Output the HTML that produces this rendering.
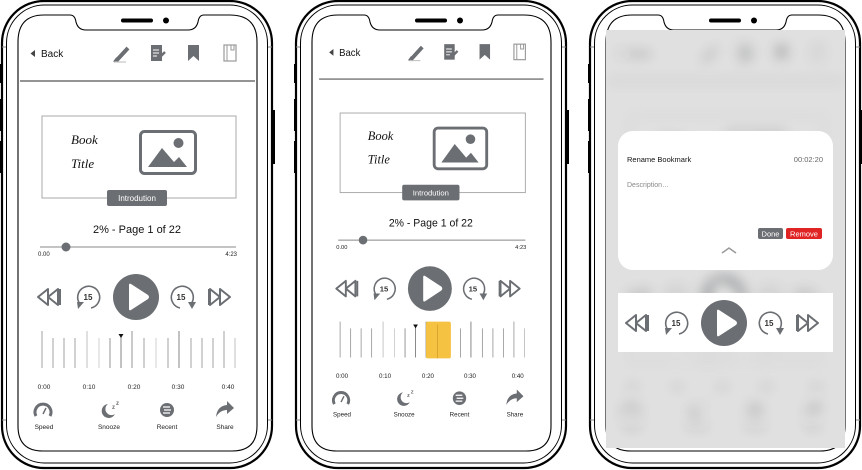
<!DOCTYPE html>
<html><head><meta charset="utf-8"><style>
html,body{margin:0;padding:0;background:#fff;width:862px;height:470px;overflow:hidden}
svg{display:block}
text{font-family:"Liberation Sans",sans-serif}
text.bt{font-family:"Liberation Serif",serif;font-style:italic}
</style></head><body>
<svg width="862" height="470" viewBox="0 0 862 470" xmlns="http://www.w3.org/2000/svg">
<defs>
<filter id="bl" x="-10%" y="-10%" width="120%" height="120%"><feGaussianBlur stdDeviation="6"/></filter>
<clipPath id="scr3"><path d="M606 30 H845 V448 H606Z"/></clipPath>
<g id="shell">
  <rect x="2" y="1" width="270" height="467" rx="42" fill="none" stroke="#000" stroke-width="2.2"/>
  <rect x="6.5" y="5" width="261" height="458" rx="38" fill="none" stroke="#000" stroke-width="1"/>
  <path d="M44 15 H70 Q75 15 76 22 Q78 30 86 30 H188 Q196 30 198 22 Q199 15 204 15 H230 Q257 15 257 42 V426 Q257 451 232 451 H43 Q18 451 18 426 V42 Q18 15 44 15Z" fill="none" stroke="#000" stroke-width="1.1"/>
  <rect x="121" y="18.5" width="32" height="4" rx="2" fill="#000"/>
  <circle cx="166" cy="20.5" r="3" fill="#000"/>
  <rect x="0" y="64" width="3" height="19" fill="#000"/>
  <rect x="0" y="99" width="3" height="32" fill="#000"/>
  <rect x="0" y="141" width="3" height="32" fill="#000"/>
  <rect x="272" y="110" width="3" height="54" fill="#000"/>
  <line x1="2" y1="47" x2="6" y2="47" stroke="#888"/><line x1="268" y1="47" x2="272" y2="47" stroke="#888"/>
  <line x1="2" y1="420" x2="6" y2="420" stroke="#888"/><line x1="268" y1="420" x2="272" y2="420" stroke="#888"/>
</g>
<g id="ctrls">
  <path d="M38 297 L48 289 V305Z M48 297 L58 289 V305Z" fill="none" stroke="#6b6e72" stroke-width="2" stroke-linejoin="round"/>
  <line x1="60" y1="289" x2="60" y2="305" stroke="#6b6e72" stroke-width="2"/>
  <path d="M80 304 A11 11 0 1 1 91 308" fill="none" stroke="#6b6e72" stroke-width="1.6"/>
  <path d="M77 302 L84 302 L78 309Z" fill="#6b6e72"/>
  <text x="88" y="300" font-size="8" font-weight="bold" text-anchor="middle" fill="#333">15</text>
  <circle cx="136" cy="297" r="23" fill="#6b6e72"/>
  <path d="M129 285 Q129 283 131 284 L148 295 Q150 297 148 299 L131 310 Q129 311 129 309Z" fill="#fff"/>
  <path d="M180 308 A11 11 0 1 1 191 304" fill="none" stroke="#6b6e72" stroke-width="1.6"/>
  <path d="M188 302 L196 302 L192 309Z" fill="#6b6e72"/>
  <text x="181" y="300" font-size="8" font-weight="bold" text-anchor="middle" fill="#333">15</text>
  <path d="M210 289 L220 297 L210 305Z M220 289 L230 297 L220 305Z" fill="none" stroke="#6b6e72" stroke-width="2" stroke-linejoin="round"/>
  <line x1="209" y1="289" x2="209" y2="305" stroke="#6b6e72" stroke-width="2"/>
</g>
<g id="content">
  <path d="M35 50 L30.5 53.5 L35 57Z" fill="#444"/>
  <text x="41" y="57" font-size="10" fill="#111">Back</text>
  <path d="M116 61 L128 48" stroke="#6b6e72" stroke-width="4" stroke-linecap="butt"/>
  <path d="M114 62 L117 58" stroke="#6b6e72" stroke-width="2"/>
  <line x1="114" y1="62" x2="126" y2="62" stroke="#bbb" stroke-width="1"/>
  <rect x="151" y="45" width="11" height="16" fill="#6b6e72"/>
  <path d="M153 50 H159 M153 53 H159 M153 56 H157" stroke="#fff" stroke-width="1"/>
  <path d="M158 59 L165 52" stroke="#6b6e72" stroke-width="2.5"/>
  <path d="M188 45 H199 V61 L193.5 56 L188 61Z" fill="#6b6e72"/>
  <rect x="224" y="45" width="12" height="16" fill="none" stroke="#999" stroke-width="1.2"/>
  <path d="M227 45 V61 M231 45 V50 H234 V45" fill="none" stroke="#999" stroke-width="1"/>
  <line x1="20" y1="81" x2="255" y2="81" stroke="#555" stroke-width="1.2"/>
  <rect x="42" y="116" width="194" height="82" fill="none" stroke="#aaa" stroke-width="1"/>
  <text class="bt" x="71" y="144" font-size="13" fill="#111">Book</text>
  <text class="bt" x="71" y="168" font-size="13" fill="#111">Title</text>
  <rect x="140.5" y="131.5" width="55" height="42" rx="4" fill="none" stroke="#6b6e72" stroke-width="3"/>
  <circle cx="178.5" cy="143" r="5" fill="#6b6e72"/>
  <path d="M148 167 L162 148 L174 162 L179 157 L187 167Z" fill="#6b6e72"/>
  <rect x="107" y="190" width="60" height="16" rx="2" fill="#6b6e72"/>
  <text x="137" y="201" font-size="8" text-anchor="middle" fill="#fff">Introdution</text>
  <text x="137" y="233" font-size="11" text-anchor="middle" fill="#111">2%  - Page 1 of 22</text>
  <line x1="40" y1="247" x2="236" y2="247" stroke="#888" stroke-width="1"/>
  <circle cx="66" cy="247" r="4.5" fill="#6b6e72"/>
  <text x="38" y="256" font-size="6" fill="#222">0.00</text>
  <text x="237" y="256" font-size="6" text-anchor="end" fill="#222">4:23</text>
  <use href="#ctrls"/>
  <g stroke-width="0.9">
   <line x1="42" y1="331" x2="42" y2="368" stroke="#999"/>
   <line x1="53" y1="338" x2="53" y2="368" stroke="#999"/>
   <line x1="64" y1="338" x2="64" y2="368" stroke="#999"/>
   <line x1="75" y1="338" x2="75" y2="368" stroke="#999"/>
   <line x1="87" y1="331" x2="87" y2="368" stroke="#bbb"/>
   <line x1="99" y1="338" x2="99" y2="368" stroke="#ccc"/>
   <line x1="110" y1="338" x2="110" y2="368" stroke="#888"/>
   <line x1="121" y1="336" x2="121" y2="368" stroke="#777"/>
   <line x1="132" y1="331" x2="132" y2="368" stroke="#888"/>
   <line x1="144" y1="338" x2="144" y2="368" stroke="#999"/>
   <line x1="156" y1="338" x2="156" y2="368" stroke="#ccc"/>
   <line x1="168" y1="338" x2="168" y2="368" stroke="#999"/>
   <line x1="179" y1="331" x2="179" y2="368" stroke="#777"/>
   <line x1="191" y1="338" x2="191" y2="368" stroke="#999"/>
   <line x1="202" y1="338" x2="202" y2="368" stroke="#999"/>
   <line x1="213" y1="338" x2="213" y2="368" stroke="#999"/>
   <line x1="224" y1="331" x2="224" y2="368" stroke="#999"/>
   <line x1="235" y1="338" x2="235" y2="368" stroke="#bbb"/>
  </g>
  <path d="M118.5 334 H123.5 L121 338Z" fill="#111"/>
  <g font-size="6.5" fill="#222" text-anchor="middle">
   <text x="44" y="389">0:00</text><text x="89" y="389">0:10</text><text x="134" y="389">0:20</text><text x="178" y="389">0:30</text><text x="228" y="389">0:40</text>
  </g>
  <path d="M36 416 A8 8 0 1 1 50 416" fill="none" stroke="#6b6e72" stroke-width="3"/>
  <path d="M43 414 L46 408" stroke="#6b6e72" stroke-width="1.5"/>
  <path d="M108 404 A7 7 0 1 0 115 414 A6 6 0 0 1 108 404Z" fill="#6b6e72"/>
  <text x="112" y="409" font-size="6" font-weight="bold" fill="#6b6e72">z</text>
  <text x="116" y="405" font-size="6" font-weight="bold" fill="#6b6e72">z</text>
  <circle cx="167" cy="410" r="7" fill="#6b6e72"/>
  <path d="M163 407 H170 M164 410 H171 M163 413 H170" stroke="#fff" stroke-width="1.3"/>
  <path d="M216 417 Q217 406 227 405 V401 L234 408 L227 414 V410 Q220 410 216 417Z" fill="#6b6e72"/>
  <g font-size="6.5" fill="#222" text-anchor="middle">
   <text x="44" y="429">Speed</text><text x="109" y="429">Snooze</text><text x="167" y="429">Recent</text><text x="225" y="429">Share</text>
  </g>
</g>
</defs>

<use href="#shell"/>
<use href="#content"/>

<use href="#shell" transform="translate(294,0)"/>
<g transform="translate(300,0.5) scale(0.955,0.97)">
  <use href="#content"/>
  <rect x="132" y="331" width="26" height="38" rx="2" fill="#f6c242"/>
  <line x1="144" y1="334" x2="144" y2="369" stroke="#d9a530" stroke-width="1"/>
</g>

<use href="#shell" transform="translate(588,0)"/>
<g clip-path="url(#scr3)">
  <rect x="600" y="28" width="250" height="425" fill="#e0e0e0"/>
  <g filter="url(#bl)" opacity="0.45" transform="translate(588,0)"><use href="#content"/></g>
</g>
<rect x="618" y="131" width="215" height="139" rx="15" fill="#fff"/>
<text x="627" y="162" font-size="7.5" fill="#111">Rename Bookmark</text>
<text x="823" y="162" font-size="7.5" text-anchor="end" fill="#666">00:02:20</text>
<text x="627" y="187" font-size="7" fill="#888">Description…</text>
<rect x="758" y="228" width="25" height="11" rx="2" fill="#6b6e72"/>
<text x="770.5" y="236.5" font-size="7.5" text-anchor="middle" fill="#fff">Done</text>
<rect x="786" y="228" width="36" height="11" rx="2" fill="#e02424"/>
<text x="804" y="236.5" font-size="7.5" text-anchor="middle" fill="#fff">Remove</text>
<path d="M722 253 L729 248 L736 253" fill="none" stroke="#999" stroke-width="1.5"/>
<rect x="618" y="293" width="215" height="59" fill="#fff"/>
<g transform="translate(588,26)"><use href="#ctrls"/></g>
</svg>
</body></html>
